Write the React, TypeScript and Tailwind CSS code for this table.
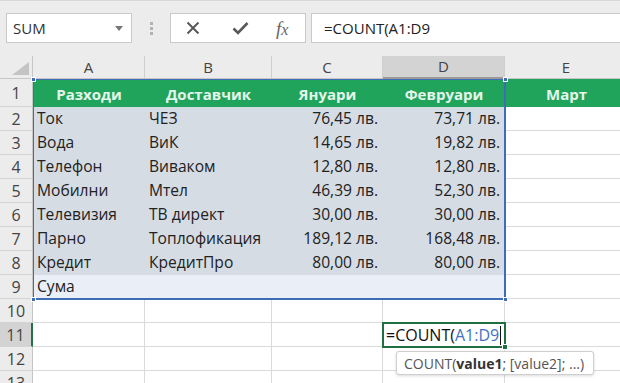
import React from 'react';

const data: string[][] = [
  ['Разходи', 'Доставчик', 'Януари', 'Февруари', 'Март'],
  ['Ток', 'ЧЕЗ', '76,45 лв.', '73,71 лв.'],
  ['Вода', 'ВиК', '14,65 лв.', '19,82 лв.'],
  ['Телефон', 'Виваком', '12,80 лв.', '12,80 лв.'],
  ['Мобилни', 'Мтел', '46,39 лв.', '52,30 лв.'],
  ['Телевизия', 'ТВ директ', '30,00 лв.', '30,00 лв.'],
  ['Парно', 'Топлофикация', '189,12 лв.', '168,48 лв.'],
  ['Кредит', 'КредитПро', '80,00 лв.', '80,00 лв.'],
  ['Сума'],
  [],
  [],
  [],
  [],
];

const columns = ['A', 'B', 'C', 'D', 'E'];

function Handle({ className }: { className: string }) {
  return <div className={`absolute w-[5px] h-[5px] bg-[#3f6cb4] border border-white ${className}`} />;
}

function Toolbar() {
  return (
    <div className="h-[56px] bg-[#ececec] border-t border-[#d8d8d8] flex items-start pt-[12px]">
      <div className="ml-[6px] w-[126px] h-[30px] bg-white border border-[#c9c9c9] flex items-center justify-between pl-[6px] pr-[8px]">
        <span className="text-[15px] text-[#333]">SUM</span>
        <svg width="8" height="5" viewBox="0 0 8 5">
          <path d="M0 0h8L4 5z" fill="#777" />
        </svg>
      </div>
      <div className="w-[38px] h-[30px] flex flex-col items-center justify-center gap-[2px]">
        <span className="w-[3px] h-[3px] bg-[#b3b3b3]" />
        <span className="w-[3px] h-[3px] bg-[#b3b3b3]" />
        <span className="w-[3px] h-[3px] bg-[#b3b3b3]" />
      </div>
      <div className="w-[136px] h-[30px] bg-white border border-[#c9c9c9] flex items-center">
        <svg className="ml-[15px]" width="14" height="14" viewBox="0 0 14 14">
          <path d="M1.5 1.5l11 11M12.5 1.5l-11 11" stroke="#585858" strokeWidth="2" />
        </svg>
        <svg className="ml-[32px]" width="17" height="14" viewBox="0 0 17 14">
          <path d="M1.5 7.5l4.5 4.5L15.5 2" stroke="#585858" strokeWidth="2.6" fill="none" />
        </svg>
        <span className="ml-[27px] font-['Liberation_Serif',serif] italic text-[19px] text-[#666] leading-none">
          f<span className="text-[16px]">x</span>
        </span>
      </div>
      <div className="ml-[5px] flex-1 h-[30px] bg-white border border-r-0 border-[#c9c9c9] flex items-center pl-[12px] text-[15px] text-[#222]">
        =COUNT(A1:D9
      </div>
    </div>
  );
}

export default function App() {
  return (
    <div className="w-[620px] h-[383px] overflow-hidden bg-white font-['Open_Sans',sans-serif]">
      <Toolbar />
      <div className="relative grid grid-cols-[33px_112px_127px_111px_122px_123px] grid-rows-[23px_28px_repeat(12,24px)]">
        <div className="bg-[#ececec] border-r border-b border-[#c6c6c6] flex items-end justify-end pr-[3px] pb-[3px]">
          <svg width="17" height="13" viewBox="0 0 17 13">
            <path d="M17 0v13H0z" fill="#c4c4c4" />
          </svg>
        </div>
        {columns.map((c) => (
          <div
            key={c}
            className={`flex items-center justify-center text-[15px] text-[#444] border-r border-[#cfcfcf] ${
              c === 'D' ? 'bg-[#d3d3d3] border-b-2 border-b-[#9a9a9a]' : 'bg-[#ececec] border-b border-b-[#c6c6c6]'
            }`}
          >
            {c}
          </div>
        ))}
        {data.map((row, i) => {
          const r = i + 1;
          return (
            <React.Fragment key={r}>
              <div
                className={`flex justify-center text-[16px] text-[#444] border-b border-[#d4d4d4] ${
                  r === 1 ? 'items-end pb-[1px]' : 'items-center'
                } ${r === 11 ? 'bg-[#d3d3d3] border-r-2 border-r-[#217346]' : 'bg-[#ececec] border-r border-r-[#c6c6c6]'}`}
              >
                {r}
              </div>
              {columns.map((_, c) => {
                const text = row[c] ?? '';
                if (r === 1) {
                  return (
                    <div
                      key={c}
                      className="bg-[#20a35a] flex items-end justify-center pb-[2px] text-[15px] font-bold text-[#e3f6eb]"
                    >
                      {text}
                    </div>
                  );
                }
                if (r <= 9 && c < 4) {
                  const right = c >= 2;
                  return (
                    <div
                      key={c}
                      className={`flex items-center text-[15.6px] text-[#222] ${r === 9 ? 'bg-[#e9eef7]' : 'bg-[#d6dce4]'} ${
                        right ? 'justify-end pr-[5px]' : 'pl-[4px]'
                      }`}
                    >
                      {text}
                    </div>
                  );
                }
                if (r === 11 && c === 3) {
                  return (
                    <div key={c} className="relative border-r border-b border-[#dadada]">
                      <div className="absolute -left-[1px] -top-[1px] w-[124px] h-[26px] border-2 border-[#1f6f43] flex items-center pl-[2px] text-[16px] text-[#111] whitespace-nowrap">
                        =COUNT(<span className="text-[#4472c4]">A1:D9</span>
                        <span className="ml-[1px] w-[1px] h-[19px] bg-[#111]" />
                        <span className="absolute -right-[4px] -bottom-[4px] w-[6px] h-[6px] bg-[#1f6f43] border border-white" />
                      </div>
                    </div>
                  );
                }
                return <div key={c} className="border-r border-b border-[#dadada]" />;
              })}
            </React.Fragment>
          );
        })}

        <div className="absolute left-[33px] top-[23px] w-[473px] h-[221px] border-l border-t border-r-2 border-b-2 border-[#3f6cb4] pointer-events-none">
          <Handle className="-left-[3px] -top-[3px]" />
          <Handle className="-right-[4px] -top-[3px]" />
          <Handle className="-left-[3px] -bottom-[4px]" />
          <Handle className="-right-[4px] -bottom-[4px]" />
        </div>

        <div className="absolute left-[396px] top-[295px] w-[198px] h-[24px] bg-white border border-[#cfcfcf] rounded-[3px] shadow-[0_1px_3px_rgba(0,0,0,0.15)] flex items-center pl-[7px] text-[14px] text-[#555] whitespace-nowrap">
          COUNT(<span className="font-bold text-[#333]">value1</span>; [value2]; ...)
        </div>
      </div>
    </div>
  );
}
